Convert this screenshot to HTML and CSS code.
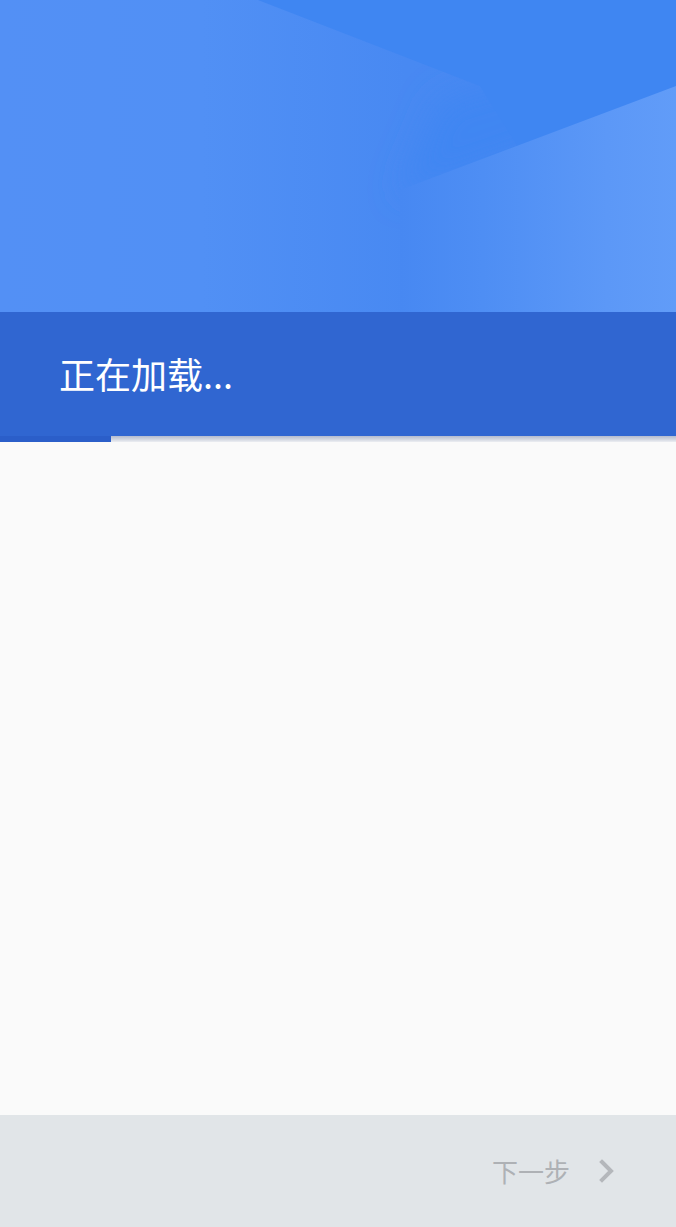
FILE: index.html
```html
<!DOCTYPE html>
<html lang="zh-CN">
<head>
<meta charset="utf-8">
<title>正在加载</title>
<link rel="stylesheet" href="styles.css">
</head>
<body>
<div class="screen">
  <header class="header">
    <div class="art">
      <svg class="art-svg" viewBox="0 0 676 312" preserveAspectRatio="none" aria-hidden="true">
        <defs>
          <linearGradient id="bg" x1="0" y1="0" x2="1" y2="0">
            <stop offset="0" stop-color="#5390f5"/>
            <stop offset="0.3" stop-color="#5190f5"/>
            <stop offset="0.6" stop-color="#4889f2"/>
            <stop offset="1" stop-color="#4587f2"/>
          </linearGradient>
          <linearGradient id="wedge" x1="0" y1="0" x2="1" y2="0">
            <stop offset="0" stop-color="#4788f2"/>
            <stop offset="0.3" stop-color="#4e8ef4"/>
            <stop offset="0.75" stop-color="#5c98f7"/>
            <stop offset="1" stop-color="#619cf8"/>
          </linearGradient>
          <filter id="soft" x="-30%" y="-40%" width="160%" height="180%">
            <feGaussianBlur stdDeviation="16"/>
          </filter>
        </defs>
        <rect x="0" y="0" width="676" height="312" fill="url(#bg)"/>
        <polygon points="440,100 540,70 676,60 676,100 400,196" fill="#3f86f2" filter="url(#soft)"/>
        <polygon points="258,0 676,0 676,92 520,150 480,86" fill="#3f86f2"/>
        <polygon points="400,190 676,86 676,312 400,312" fill="url(#wedge)"/>
      </svg>
    </div>
    <div class="band">
      <h1 class="title">正在加载...</h1>
    </div>
    <div class="progress">
      <div class="progress-fill"></div>
    </div>
  </header>
  <main class="content"></main>
  <footer class="footer">
    <button class="next" type="button">
      <span class="next-label">下一步</span>
      <svg class="chevron" viewBox="0 0 16 24" aria-hidden="true">
        <path d="M3 3 L12 12 L3 21" fill="none" stroke="#b4b7bb" stroke-width="4" stroke-linecap="square" stroke-linejoin="miter"/>
      </svg>
    </button>
  </footer>
</div>
</body>
</html>
```
FILE: styles.css
```css
* { box-sizing: border-box; }
html, body {
  margin: 0;
  padding: 0;
  background: #fafafa;
}
body {
  font-family: "Noto Sans CJK SC", "Noto Sans", Roboto, sans-serif;
}
.screen {
  width: 676px;
  height: 1227px;
  display: flex;
  flex-direction: column;
  overflow: hidden;
}
.header {
  flex: none;
  display: flex;
  flex-direction: column;
}
.art {
  height: 312px;
  line-height: 0;
}
.art-svg {
  width: 676px;
  height: 312px;
  display: block;
}
.band {
  height: 124px;
  background: #3066d1;
  display: flex;
  align-items: center;
  padding-left: 59px;
}
.title {
  margin: -2px 0 0 0;
  color: #ffffff;
  font-size: 36px;
  font-weight: 400;
  line-height: 1;
  letter-spacing: 0;
}
.progress {
  height: 6px;
  background: linear-gradient(to bottom, #b3bbcf, #d4d8e2 60%, #eceef2);
  display: flex;
}
.progress-fill {
  width: 111px;
  background: #2b5ec9;
}
.content {
  flex: 1;
  background: #fafafa;
}
.footer {
  flex: none;
  height: 112px;
  background: #e1e5e8;
  display: flex;
  align-items: center;
  justify-content: flex-end;
  padding-right: 61px;
}
.next {
  border: 0;
  background: transparent;
  padding: 0;
  display: flex;
  align-items: center;
  gap: 29px;
  font-family: inherit;
  cursor: pointer;
}
.next-label {
  color: #aeb1b5;
  font-size: 26px;
  line-height: 1;
}
.chevron {
  width: 16px;
  height: 24px;
  display: block;
}
```
